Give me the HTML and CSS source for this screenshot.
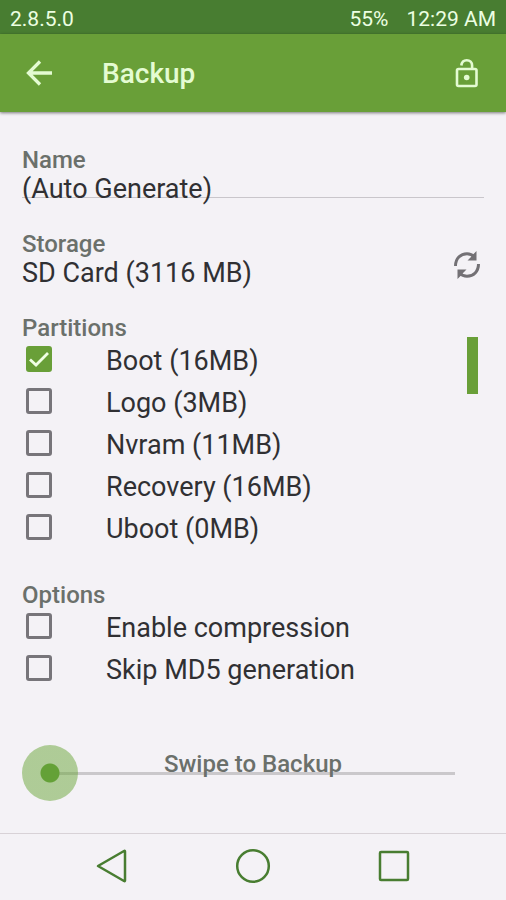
FILE: index.html
```html
<!DOCTYPE html>
<html lang="en">
<head>
<meta charset="utf-8">
<meta name="viewport" content="width=device-width, initial-scale=1">
<title>Backup</title>
<link rel="stylesheet" href="styles.css">
</head>
<body>
<div class="app">
  <div class="status">
    <span>2.8.5.0</span>
    <span class="status-right"><span>55%</span><span>12:29 AM</span></span>
  </div>
  <header class="bar">
    <button class="icon-button" type="button" aria-label="Back">
      <svg width="34" height="34" viewBox="0 0 34 34" fill="none" stroke="currentColor" stroke-width="3.300"><path d="M30 17H7M18 5.500L6.500 17L18 28.500"/></svg>
    </button>
    <h1 class="title">Backup</h1>
    <button class="icon-button" type="button" aria-label="Lock screen">
      <svg width="34" height="34" viewBox="0 0 34 34" fill="none" stroke="currentColor" stroke-width="2.600"><rect x="7" y="13" width="19.500" height="17" rx="1.500"/><path d="M11.300 9.500C11.800 6 13.900 4.200 16.700 4.200C20 4.200 22.100 6.400 22.100 9.500V13"/><circle cx="16.700" cy="21.500" r="2.800" fill="currentColor" stroke="none"/></svg>
    </button>
  </header>

  <main class="content">
    <div class="field">
      <label class="label" for="name">Name</label>
      <input class="name-input" id="name" type="text" value="(Auto Generate)">
    </div>

    <div class="storage">
      <div>
        <h2 class="label">Storage</h2>
        <p class="value">SD Card (3116 MB)</p>
      </div>
      <button class="icon-button refresh" type="button" aria-label="Refresh sizes">
        <svg width="34" height="34" viewBox="0 0 34 34"><g fill="none" stroke="currentColor" stroke-width="3"><path d="M5.500 18C5.500 10.500 10.500 5.700 17 5.700C20 5.700 22.500 6.900 24.500 9"/><path d="M28.500 16C28.500 23.500 23.500 28.300 17 28.300C14 28.300 11.500 27.100 9.500 25"/></g><path fill="currentColor" d="M26.500 3V12.500H17.500L20.500 9.500L23.500 6zM7.500 31V21.500H16.500L13.500 24.500L10.500 28z"/></svg>
      </button>
    </div>

    <section class="group partitions">
      <h2 class="label">Partitions</h2>
      <div class="list">
        <label class="row"><input class="check" type="checkbox" checked><span>Boot (16MB)</span></label>
        <label class="row"><input class="check" type="checkbox"><span>Logo (3MB)</span></label>
        <label class="row"><input class="check" type="checkbox"><span>Nvram (11MB)</span></label>
        <label class="row"><input class="check" type="checkbox"><span>Recovery (16MB)</span></label>
        <label class="row"><input class="check" type="checkbox"><span>Uboot (0MB)</span></label>
      </div>
      <div class="scroll-thumb"></div>
    </section>

    <section class="group">
      <h2 class="label">Options</h2>
      <div class="list">
        <label class="row"><input class="check" type="checkbox"><span>Enable compression</span></label>
        <label class="row"><input class="check" type="checkbox"><span>Skip MD5 generation</span></label>
      </div>
    </section>

    <div class="swipe">
      <input class="slider" id="swipe" type="range" min="0" max="100" value="0">
      <label class="label swipe-label" for="swipe">Swipe to Backup</label>
    </div>
  </main>

  <nav class="nav">
    <button class="icon-button" type="button" aria-label="Back">
      <svg width="36" height="36" viewBox="0 0 36 36" fill="none" stroke="currentColor" stroke-width="2.500" stroke-linejoin="round"><path d="M4 18L30 3Q31 2.500 31 3.500V32.500Q31 33.500 30 33L4 18z"/></svg>
    </button>
    <button class="icon-button" type="button" aria-label="Home">
      <svg width="36" height="36" viewBox="0 0 36 36" fill="none" stroke="currentColor" stroke-width="2.500"><circle cx="18" cy="18" r="15.800"/></svg>
    </button>
    <button class="icon-button" type="button" aria-label="Recent">
      <svg width="36" height="36" viewBox="0 0 36 36" fill="none" stroke="currentColor" stroke-width="2.500"><rect x="4" y="4" width="28" height="28" rx="1"/></svg>
    </button>
  </nav>
</div>
</body>
</html>
```
FILE: styles.css
```css
* {
  box-sizing: border-box;
}

body {
  margin: 0;
  background: #f4f2f6;
  color: #303033;
  font-family: Roboto, "Liberation Sans", sans-serif;
  font-size: 27px;
  line-height: 32px;
}

h1, h2, p {
  margin: 0;
}

.app {
  display: flex;
  flex-direction: column;
  min-height: 100vh;
}

.status {
  display: flex;
  justify-content: space-between;
  padding: 4px 10px 0;
  background: #487d31;
  color: #ecffe2;
  font-size: 21px;
  line-height: 30px;
}

.status-right {
  display: flex;
  gap: 18px;
}

.bar {
  display: flex;
  align-items: center;
  padding: 22px;
  background: #699f38;
  color: #e4fbd2;
  box-shadow: 0 1px 3px rgba(0, 0, 0, 0.5);
}

.icon-button {
  display: flex;
  padding: 0;
  border: 0;
  background: none;
  color: inherit;
}

.title {
  flex: 1;
  padding: 2px 0 0 46px;
  font-size: 28px;
  font-weight: 500;
}

.content {
  display: flex;
  flex: 1;
  flex-direction: column;
  padding: 35px 22px 32px;
}

.label {
  display: block;
  color: #6b706b;
  font-size: 24px;
  font-weight: 500;
  line-height: 26px;
}

.field {
  margin-bottom: 26px;
}

.name-input {
  display: block;
  width: 100%;
  height: 32px;
  padding: 0;
  border: 0;
  background: linear-gradient(#c9c6cb, #c9c6cb) 0 24px / 100% 1px no-repeat;
  color: inherit;
  font: inherit;
}

.storage {
  display: flex;
  align-items: center;
  justify-content: space-between;
  margin-bottom: 26px;
}

.refresh {
  padding-top: 10px;
  color: #737175;
}

.group {
  position: relative;
}

.partitions {
  margin-bottom: 37px;
}

.list {
  display: grid;
  gap: 6px;
}

.row {
  display: flex;
  align-items: center;
  gap: 54px;
  height: 36px;
}

.row span {
  padding-top: 3px;
}

.check {
  width: 26px;
  height: 26px;
  margin: 0 0 0 4px;
  border: 3px solid #77757a;
  border-radius: 3px;
  appearance: none;
}

.check:checked {
  border-color: #699f38;
  background: #699f38 url("data:image/svg+xml,%3Csvg xmlns='http://www.w3.org/2000/svg' viewBox='0 0 22 22'%3E%3Cpath d='M2 11.500L8 17L20 5' fill='none' stroke='%23f0ffe4' stroke-width='2.800'/%3E%3C/svg%3E") center / 22px no-repeat border-box;
}

.scroll-thumb {
  position: absolute;
  top: 22px;
  right: 6px;
  width: 11px;
  height: 57px;
  background: #699f38;
}

.swipe {
  position: relative;
  margin-top: auto;
  padding-right: 29px;
}

.slider {
  display: block;
  width: 100%;
  height: 56px;
  margin: 0;
  background: linear-gradient(#cac8cb, #cac8cb) 28px 27px / 100% 3px no-repeat;
  appearance: none;
}

.slider::-webkit-slider-thumb {
  width: 56px;
  height: 56px;
  border-radius: 50%;
  background: radial-gradient(circle, #64a137 9px, rgba(105, 165, 56, 0.5) 10px);
  appearance: none;
}

.swipe-label {
  position: absolute;
  top: 6px;
  left: 0;
  right: 0;
  text-align: center;
  pointer-events: none;
}

.nav {
  display: flex;
  align-items: center;
  justify-content: center;
  gap: 105px;
  padding: 14px 0 16px;
  border-top: 1px solid #d8d2d7;
  color: #487d31;
}
```
